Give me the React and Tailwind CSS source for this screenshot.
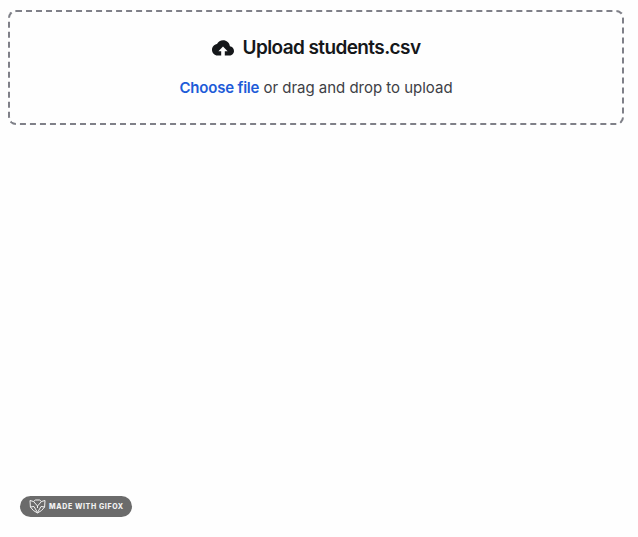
import React from "react";

function CloudUp() {
  return (
    <svg width="22" height="16" viewBox="0 0 22 16" className="block" aria-hidden="true">
      <path fill="#15171a" d="M17.9 6.300C17.500 2.800 14.600.3 11.100.3 8.400.3 6.100 1.700 5 4 2.200 4.400 0 6.800 0 9.800c0 3.200 2.500 5.800 5.600 5.800h3.600v-4.300H6.400L11 6.500l4.600 4.800h-2.800v4.300h4.500c2.600 0 4.700-2.200 4.700-4.700 0-2.400-1.800-4.300-4.100-4.600z" />
    </svg>
  );
}

function FoxMark() {
  return (
    <svg width="17" height="15" viewBox="0 0 17 15" className="block" aria-hidden="true" fill="none" stroke="#f2f2f2" strokeWidth="1" strokeLinejoin="round">
      <path d="M1 1.500l3.500 1L6.500 1h4l2 1.500 3.500-1-.4 6.500-3 3.500-4.100 2.500-4.100-2.500-3-3.500z" />
      <path d="M4.500 2.500L8.500 7l4-4.500M1.400 8l3.600-.5 3.500 6 3.500-6 3.600.5M8.500 7v2" />
    </svg>
  );
}

export default function App() {
  return (
    <div className="relative h-[537px] w-[638px] overflow-hidden bg-[#fefefe] pt-[10px] pl-2 font-['Inter','Liberation_Sans',sans-serif]">
      <div className="flex h-[115px] w-[616px] flex-col items-center rounded-lg border-2 border-dashed border-[#7f8088] pt-[24px]">
        <div className="flex items-center gap-[9px]">
          <CloudUp />
          <h1 className="text-[19px] leading-6 font-semibold tracking-[-0.6px] text-[#15171a]">Upload students.csv</h1>
        </div>
        <p className="mt-[16px] text-[15px] leading-6 tracking-[-0.02px] text-[#3d4045]">
          <span className="font-semibold tracking-[-0.2px] text-[#1d5bd8]">Choose file</span> or drag and drop to upload
        </p>
      </div>
      <div className="absolute top-[496px] left-[20px] flex h-[21px] w-[112px] items-center gap-[3px] rounded-full bg-[#6b6b6b] pl-[9px]">
        <FoxMark />
        <span className="text-[7px] leading-none font-extrabold tracking-[0.62px] whitespace-nowrap text-[#f2f2f2]">MADE WITH GIFOX</span>
      </div>
    </div>
  );
}
